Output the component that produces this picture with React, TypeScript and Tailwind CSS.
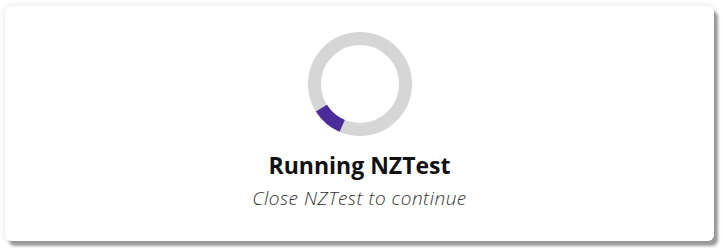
export default function App() {
  return (
    <div className="min-h-screen bg-white pl-[5px] pt-[6px]">
      <div className="flex h-[235px] w-[709px] flex-col items-center rounded-md bg-white pt-[26px] shadow-[4px_5px_3px_rgba(0,0,0,0.38),0_0_6px_rgba(0,0,0,0.12)]">
        {/* progress ring */}
        <svg width="104" height="104" viewBox="0 0 104 104">
          <circle cx="52" cy="52" r="45.5" fill="none" stroke="#d6d6d6" strokeWidth="13" />
          <path
            d="M 34.22 93.88 A 45.5 45.5 0 0 1 13.42 76.11"
            fill="none"
            stroke="#4c2b9b"
            strokeWidth="13"
          />
        </svg>
        <div className="mt-[15px] font-['Open_Sans',sans-serif] text-[23px] leading-[28px] font-bold text-[#111]">
          Running NZTest
        </div>
        <div className="mt-[7px] font-['Open_Sans',sans-serif] text-[19px] leading-[24px] tracking-[0.5px] font-light italic text-[#333]">
          Close NZTest to continue
        </div>
      </div>
    </div>
  );
}
